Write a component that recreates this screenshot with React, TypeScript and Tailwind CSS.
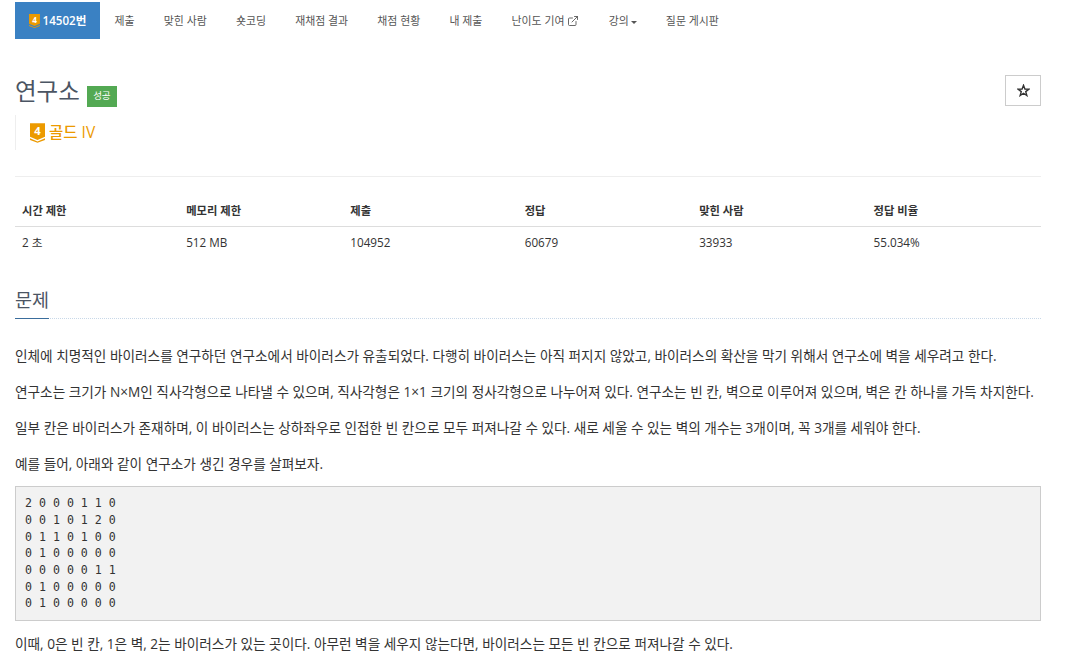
import { ExternalLink } from "lucide-react";

const sans = "font-['Open_Sans','Noto_Sans_CJK_KR',sans-serif]";

const navItems = ["제출", "맞힌 사람", "숏코딩", "재채점 결과", "채점 현황", "내 제출"];

const stats = [
  { label: "시간 제한", value: "2 초", width: "w-[16%]" },
  { label: "메모리 제한", value: "512 MB", width: "w-[16%]" },
  { label: "제출", value: "104952", width: "w-[17%]" },
  { label: "정답", value: "60679", width: "w-[17%]" },
  { label: "맞힌 사람", value: "33933", width: "w-[17%]" },
  { label: "정답 비율", value: "55.034%", width: "w-[17%]" },
];

const board = `2 0 0 0 1 1 0
0 0 1 0 1 2 0
0 1 1 0 1 0 0
0 1 0 0 0 0 0
0 0 0 0 0 1 1
0 1 0 0 0 0 0
0 1 0 0 0 0 0`;

function TierBadge({ className }: { className: string }) {
  return (
    <svg viewBox="0 0 14 18" className={className}>
      <path d="M0 0H14V12.5L7 15.5L0 12.5Z" fill="#ec9a00" />
      <path d="M0 14L7 17L14 14V15.5L7 18L0 15.5Z" fill="#ec9a00" />
      <text x="7" y="11" textAnchor="middle" fontSize="10.5" fontWeight="700" fill="#fff" fontFamily="'Open Sans',sans-serif">
        4
      </text>
    </svg>
  );
}

function NavLink({ children }: { children: React.ReactNode }) {
  return <div className="flex h-[37px] items-center px-[14.6px] pt-px text-[#555]">{children}</div>;
}

export default function App() {
  return (
    <div className={`${sans} h-[658px] overflow-hidden bg-white pl-[15px] pr-[45px] pt-[2px] text-[10.9px] leading-[18.57px] text-[#333]`}>
      <nav className="flex">
        <div className="flex h-[37px] w-[85px] items-center justify-center gap-[3px] bg-[#3a81c3] pt-px text-[11.6px] font-semibold text-white">
          <TierBadge className="h-[14px] w-[11px]" />
          14502번
        </div>
        {navItems.map((item) => (
          <NavLink key={item}>{item}</NavLink>
        ))}
        <NavLink>
          난이도 기여
          <ExternalLink className="ml-[3px] h-[12px] w-[12px]" strokeWidth={1.75} />
        </NavLink>
        <NavLink>
          강의
          <span className="ml-[2px] mt-[2px] border-x-[3px] border-t-[3px] border-x-transparent border-t-[#555]" />
        </NavLink>
        <NavLink>질문 게시판</NavLink>
      </nav>

      <div className="mt-[36px] flex items-start justify-between">
        <div className="flex items-end pt-[2px]">
          <h1 className="text-[23.5px] leading-[28px] font-normal text-[#4b5563]">연구소</h1>
          <span className="mb-[-2px] ml-[7px] flex h-[21px] w-[30px] items-center justify-center bg-[#53a953] text-[9.5px] text-white">
            성공
          </span>
        </div>
        <button className="flex h-[31px] w-[36px] items-center justify-center border border-[#ccc] text-[#333]">
          <svg viewBox="0 0 14 14" className="h-[13px] w-[13px]">
            <path
              d="M7 1.4L8.5 5.4L12.8 5.6L9.4 8.2L10.6 12.4L7 10L3.4 12.4L4.6 8.2L1.2 5.6L5.5 5.4Z"
              fill="none"
              stroke="#333"
              strokeWidth="1.5"
            />
          </svg>
        </button>
      </div>

      <div className="mt-[9px] flex h-[35px] items-center gap-[4px] border-l border-[#eee] pl-[14px] text-[15.5px] font-medium text-[#ec9a00]">
        <TierBadge className="h-[20px] w-[15px]" />
        골드 IV
      </div>

      <div className="mt-[26px] border-t border-[#eee]" />

      <table className="mt-[20px] w-full table-fixed border-collapse">
        <thead>
          <tr className="border-b border-[#ddd]">
            {stats.map((s) => (
              <th key={s.label} className={`${s.width} px-[7px] pb-[5px] pt-[5px] text-left text-[11.3px] font-semibold text-[#333]`}>
                {s.label}
              </th>
            ))}
          </tr>
        </thead>
        <tbody>
          <tr>
            {stats.map((s) => (
              <td key={s.label} className="px-[7px] py-[6px] text-[11.7px] text-[#333]">
                {s.value}
              </td>
            ))}
          </tr>
        </tbody>
      </table>

      <div className="mt-[29px] border-b border-dotted border-[#c8d8e8]">
        <h2 className="-mb-px inline-block border-b border-[#3a6d9c] pb-[5px] text-[18.5px] leading-[27px] font-normal text-[#4b5563]">
          문제
        </h2>
      </div>

      <div className="mt-[24.5px] flex flex-col gap-[12px] text-[13.65px] leading-[24px] text-[#333]">
        <p>인체에 치명적인 바이러스를 연구하던 연구소에서 바이러스가 유출되었다. 다행히 바이러스는 아직 퍼지지 않았고, 바이러스의 확산을 막기 위해서 연구소에 벽을 세우려고 한다.</p>
        <p>연구소는 크기가 N×M인 직사각형으로 나타낼 수 있으며, 직사각형은 1×1 크기의 정사각형으로 나누어져 있다. 연구소는 빈 칸, 벽으로 이루어져 있으며, 벽은 칸 하나를 가득 차지한다.</p>
        <p>일부 칸은 바이러스가 존재하며, 이 바이러스는 상하좌우로 인접한 빈 칸으로 모두 퍼져나갈 수 있다. 새로 세울 수 있는 벽의 개수는 3개이며, 꼭 3개를 세워야 한다.</p>
        <p>예를 들어, 아래와 같이 연구소가 생긴 경우를 살펴보자.</p>
        <pre className="-mt-[1.5px] border border-[#ccc] bg-[#f2f2f2] px-[9px] py-[8px] font-['DejaVu_Sans_Mono',monospace] text-[11.6px] leading-[16.71px] text-[#333]">
          {board}
        </pre>
        <p className="-mt-px">이때, 0은 빈 칸, 1은 벽, 2는 바이러스가 있는 곳이다. 아무런 벽을 세우지 않는다면, 바이러스는 모든 빈 칸으로 퍼져나갈 수 있다.</p>
      </div>
    </div>
  );
}
